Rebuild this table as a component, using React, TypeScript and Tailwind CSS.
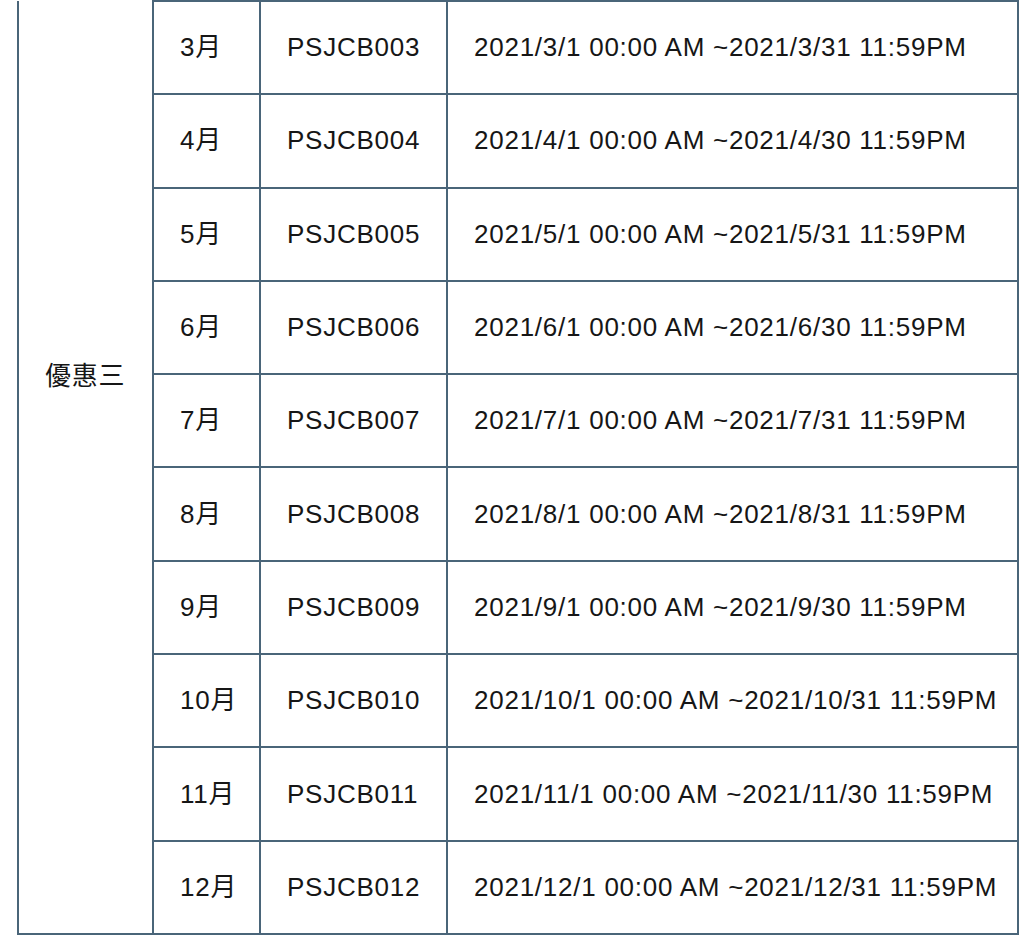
import React from "react";

const rows = [
  { month: "3月", code: "PSJCB003", period: "2021/3/1 00:00 AM ~2021/3/31 11:59PM" },
  { month: "4月", code: "PSJCB004", period: "2021/4/1 00:00 AM ~2021/4/30 11:59PM" },
  { month: "5月", code: "PSJCB005", period: "2021/5/1 00:00 AM ~2021/5/31 11:59PM" },
  { month: "6月", code: "PSJCB006", period: "2021/6/1 00:00 AM ~2021/6/30 11:59PM" },
  { month: "7月", code: "PSJCB007", period: "2021/7/1 00:00 AM ~2021/7/31 11:59PM" },
  { month: "8月", code: "PSJCB008", period: "2021/8/1 00:00 AM ~2021/8/31 11:59PM" },
  { month: "9月", code: "PSJCB009", period: "2021/9/1 00:00 AM ~2021/9/30 11:59PM" },
  { month: "10月", code: "PSJCB010", period: "2021/10/1 00:00 AM ~2021/10/31 11:59PM" },
  { month: "11月", code: "PSJCB011", period: "2021/11/1 00:00 AM ~2021/11/30 11:59PM" },
  { month: "12月", code: "PSJCB012", period: "2021/12/1 00:00 AM ~2021/12/31 11:59PM" },
];

const cell = "border-2 border-[#4a6579] px-[26px] h-[93.3px] align-middle text-left whitespace-nowrap";

const App = () => {
  return (
    <div className="min-h-screen bg-white pl-[17px] pr-[5px] font-['Liberation_Sans','Noto_Sans_CJK_TC',sans-serif] text-[26px] tracking-[0.75px] text-[#161616]">
      <table className="w-full border-collapse table-fixed">
        <colgroup>
          <col className="w-[135px]" />
          <col className="w-[107px]" />
          <col className="w-[187px]" />
          <col />
        </colgroup>
        <tbody>
          {rows.map((r, i) => (
            <tr key={r.code}>
              {i === 0 && (
                <td rowSpan={rows.length} className={`${cell} border-t-0`}>
                  <div className="pb-[180px]">優惠三</div>
                </td>
              )}
              <td className={cell}>{r.month}</td>
              <td className={cell}>{r.code}</td>
              <td className={cell}>{r.period}</td>
            </tr>
          ))}
        </tbody>
      </table>
    </div>
  );
};

export default App;
